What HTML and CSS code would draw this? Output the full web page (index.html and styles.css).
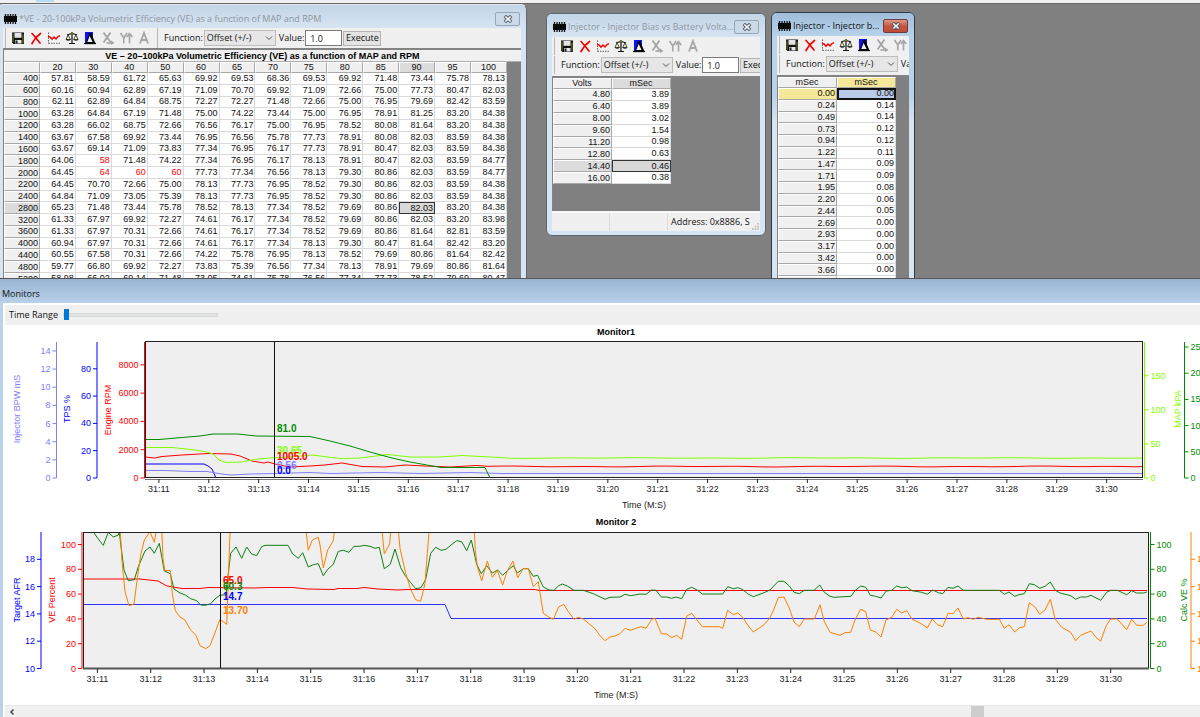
FILE: index.html
```html
<!DOCTYPE html>
<html lang="en">
<head>
<meta charset="utf-8">
<title>VE Table Editor and Monitors</title>
<link rel="stylesheet" href="styles.css">
</head>
<body>
<svg class="symbols" aria-hidden="true">
  <symbol id="i-chip" viewBox="0 0 13 10">
    <rect x="0" y="2" width="13" height="6" fill="#000"/>
    <path d="M1.5 0v10M4 0v10M6.500 0v10M9 0v10M11.500 0v10" stroke="#111" stroke-width="1.300"/>
  </symbol>
  <symbol id="i-save" viewBox="0 0 14 14">
    <path d="M1 1.500h12v11.500H2.500L1 11.500z" fill="#111"/>
    <rect x="3.500" y="2" width="7" height="4.800" fill="#e4e4e4"/>
    <rect x="4" y="9" width="6.500" height="3.500" fill="#e8e8e8"/>
    <rect x="4.500" y="9.500" width="2" height="3" fill="#222"/>
    <path d="M2 2.500v9" stroke="#8c8c30" stroke-width=".9"/>
    <path d="M12 3.500v9" stroke="#8c8c30" stroke-width=".9"/>
  </symbol>
  <symbol id="i-del" viewBox="0 0 14 14">
    <path d="M3 2.500C5.500 5 8 8.500 11 12M11.500 2.500C8 5 5 8.500 3 12.500" stroke="#f00000" stroke-width="1.700" fill="none" stroke-linecap="round"/>
  </symbol>
  <symbol id="i-wave" viewBox="0 0 14 14">
    <path d="M1.500 1.500v11M1.500 12.300h12" stroke="#666" stroke-width="1" stroke-dasharray="1.500 1" fill="none"/>
    <path d="M1 5.500l2 .5 2 2.300 2-2.300 2 2 2-2.500 2-.8" stroke="#f00" stroke-width="1.400" fill="none"/>
  </symbol>
  <symbol id="i-scale" viewBox="0 0 14 14">
    <path d="M7 1v11M4 12.500h6M2 4l3.500-1.200h3L12 4" stroke="#111" stroke-width="1.200" fill="none"/>
    <path d="M3 3.800L1 8.500h4.500zM11 3.800L8.700 8.500H13z" fill="#f3f3c0" stroke="#222" stroke-width=".8"/>
    <path d="M.5 8.500h5.500q-2.700 2.500-5.500 0zM8.200 8.500h5.500q-2.700 2.500-5.500 0z" fill="#222"/>
    <circle cx="7" cy="2.500" r="1.300" fill="#777718"/>
  </symbol>
  <symbol id="i-tri" viewBox="0 0 14 14">
    <rect x="2" y="1" width="8" height="11" fill="#1010ff"/>
    <path d="M6.500 3.500L10.500 11.500H3.500z" fill="#f0f0f0" stroke="#000" stroke-width="1.100"/>
    <path d="M7.300 2.500l4.200 9.500" stroke="#000" stroke-width="1.600"/>
    <path d="M5.500 2.500h3.500" stroke="#000" stroke-width="1.200"/>
    <path d="M1 12.500h12" stroke="#000" stroke-width="1.300"/>
  </symbol>
  <symbol id="i-xarr" viewBox="0 0 14 14">
    <path d="M2.500 1.500l7 9.500M9.500 1.500l-7 10" stroke="#a2a2a2" stroke-width="1.700" fill="none"/>
    <path d="M5.500 12h6" stroke="#a2a2a2" stroke-width="1.600"/><path d="M10 9.500l3.500 2.500-3.500 2z" fill="#a2a2a2"/>
  </symbol>
  <symbol id="i-yarr" viewBox="0 0 14 14">
    <path d="M1.500 2l3.300 5L8 2M4.800 7v5.500M10.500 3v9.500M7.800 6l2.700-3.500L13.300 6" stroke="#a6a6a6" stroke-width="1.600" fill="none"/>
  </symbol>
  <symbol id="i-a" viewBox="0 0 14 14">
    <path d="M3 12.500L7 2l4 10.500M4.500 9h5" stroke="#a6a6a6" stroke-width="1.800" fill="none"/>
  </symbol>
  <symbol id="i-close" viewBox="0 0 10 8">
    <path d="M1.800 1l6.400 6M8.200 1l-6.400 6" stroke="#4a5564" stroke-width="3.400" fill="none"/>
    <path d="M2.300 1.500l5.400 5M7.700 1.500l-5.400 5" stroke="#fff" stroke-width="1.700" fill="none"/>
  </symbol>
  <symbol id="i-chev" viewBox="0 0 8 6"><path d="M1 1.500l3 3 3-3" stroke="#555" fill="none"/></symbol>
</svg>

<div class="app">
  <div class="strip"><span class="strip-tab"></span></div>

  <main class="desktop">
    <section class="win win-ve" aria-label="VE table">
      <header class="titlebar">
        <svg class="chip"><use href="#i-chip"/></svg>
        <h2>*VE - 20-100kPa Volumetric Efficiency (VE) as a function of MAP and RPM</h2>
        <button class="close" aria-label="Close"><svg><use href="#i-close"/></svg></button>
      </header>
      <div class="client">
        <div class="bars single">
          <div class="bar icons"></div>
          <div class="bar fields">
            <label for="fn1">Function:</label>
            <span class="pick"><select id="fn1"><option>Offset (+/-)</option></select><svg><use href="#i-chev"/></svg></span>
            <label for="val1">Value:</label><input id="val1" type="text" value="1.0">
            <button class="exec">Execute</button>
          </div>
        </div>
        <div class="grid-area">
          <h3 class="caption">VE – 20–100kPa Volumetric Efficiency (VE) as a function of MAP and RPM</h3>
          <table class="sheet sheet-ve" id="ve"></table>
        </div>
      </div>
    </section>

    <section class="win win-bias" aria-label="Injector bias">
      <header class="titlebar">
        <svg class="chip"><use href="#i-chip"/></svg>
        <h2>Injector - Injector Bias vs Battery Volta...</h2>
        <button class="close" aria-label="Close"><svg><use href="#i-close"/></svg></button>
      </header>
      <div class="client">
        <div class="bars">
          <div class="bar icons"></div>
          <div class="bar fields">
            <label for="fn2">Function:</label>
            <span class="pick"><select id="fn2"><option>Offset (+/-)</option></select><svg><use href="#i-chev"/></svg></span>
            <label for="val2">Value:</label><input id="val2" type="text" value="1.0">
            <button class="exec">Execute</button>
          </div>
        </div>
        <div class="grid-area"><table class="sheet sheet-inj" id="bias"></table></div>
        <footer class="status"><span></span><span></span><span>Address: 0x8886, S</span>
          <svg class="grip" viewBox="0 0 8 8"><path d="M6 0h2v2H6zM3 3h2v2H3zM6 3h2v2H6zM0 6h2v2H0zM3 6h2v2H3zM6 6h2v2H6z" fill="#bdbdbd"/></svg>
        </footer>
      </div>
    </section>

    <section class="win win-adder active" aria-label="Injector adder">
      <header class="titlebar">
        <svg class="chip"><use href="#i-chip"/></svg>
        <h2>Injector - Injector b...</h2>
        <button class="close" aria-label="Close"><svg><use href="#i-close"/></svg></button>
      </header>
      <div class="client">
        <div class="bars">
          <div class="bar icons"></div>
          <div class="bar fields">
            <label for="fn3">Function:</label>
            <span class="pick"><select id="fn3"><option>Offset (+/-)</option></select><svg><use href="#i-chev"/></svg></span>
            <label for="val3">Value:</label><input id="val3" type="text" value="1.0">
          </div>
        </div>
        <div class="grid-area"><table class="sheet sheet-inj" id="adder"></table></div>
      </div>
    </section>
  </main>

  <section class="monitors" aria-label="Monitors">
    <h2 class="mon-title">Monitors</h2>
    <div class="mon-body">
      <div class="range-bar"><label for="range">Time Range</label><input id="range" type="range" min="0" max="100" value="0"></div>
      <svg class="chart" id="chart1" viewBox="3 325 1197 190"></svg>
      <svg class="chart" id="chart2" viewBox="3 515 1197 190"></svg>
      <div class="scroll">
        <button aria-label="Scroll left"><svg viewBox="0 0 6 8"><path d="M4.500 1.500L2 4l2.500 2.500" stroke="#444" stroke-width="1.500" fill="none"/></svg></button>
        <span class="lane"></span><span class="thumb"></span><span class="lane-after"></span>
      </div>
    </div>
  </section>
</div>
<script src="script.js"></script>
</body>
</html>
```

FILE: styles.css
```css
* { box-sizing: border-box; }
body { margin: 0; overflow: hidden; font: 9px/12px "Open Sans", "Noto Sans", sans-serif; color: #111; background: #808080; }
h2, h3 { margin: 0; font-weight: 400; }
button, input, select { font: inherit; color: inherit; }
.symbols { position: absolute; width: 0; height: 0; }

.app { display: grid; grid-template-rows: 4px 274px minmax(0, 1fr); height: 100vh; }
.strip { background: #f0f0f0; border-bottom: 1px solid #686868; padding-left: 36px; }
.strip-tab { display: block; width: 18px; height: 2px; background: #b5dcf7; }
.desktop { position: relative; overflow: hidden; background: #808080; }

/* windows placed on the desktop */
.win { position: absolute; display: flex; flex-direction: column; border: 1px solid #5e6770; border-radius: 6px 6px 0 0; background: #d7e4f2; padding: 0 5px 4px; }
.win-ve { left: -3px; top: 0; width: 530px; height: 300px; border-top-color: #dfe8f0; }
.win-bias { left: 546px; top: 9px; width: 220px; height: 223px; border-radius: 6px; }
.win-adder { left: 771px; top: 8px; width: 144px; height: 300px; }
.titlebar { flex: none; display: flex; align-items: center; gap: 2px; height: 23px; margin: 0 -5px; padding: 3px 6px 0; border-radius: 5px 5px 0 0; background: linear-gradient(#c3d5e6, #d7e4f2); color: #8e969e; }
.win-ve .titlebar { padding-top: 4px; }
.titlebar h2 { flex: 1; min-width: 0; font-size: 9px; line-height: 14px; white-space: nowrap; }
.active { background: linear-gradient(#b7d2ea 80px, #d7e4f2 110px); border-color: #303a44; }
.active .titlebar { background: linear-gradient(#9fbedb, #b7d2ea); color: #111; }
.chip { flex: none; width: 13px; height: 10px; }
.close { flex: none; display: grid; place-items: center; width: 25px; height: 14px; padding: 0; border: 1px solid #94a5b8; border-radius: 2px; background: #cadae9; }
.close svg { width: 10px; height: 8px; }
.active .close { background: linear-gradient(#dd9a8c, #c5553f 50%, #c04a36); border-color: #6b3a3a; }

.client { flex: 1; min-height: 0; display: flex; flex-direction: column; background: #f0f0f0; overflow: hidden; }
.bars { flex: none; display: flex; flex-direction: column; gap: 1px; padding-bottom: 2px; }
.bars.single { flex-direction: row; padding-bottom: 0; }
.bar { display: flex; align-items: center; height: 18px; margin-left: 2px; border-left: 1px solid #b8b8b8; white-space: nowrap; }
.icons { gap: 4px; padding-left: 5px; }
.tool { flex: none; padding: 0; border: 0; background: none; width: 14px; height: 14px; }
.tool svg { display: block; width: 14px; height: 14px; }
.fields { gap: 1px; padding-left: 6px; overflow: hidden; }
.pick { position: relative; flex: none; margin-right: 2px; }
.pick select { appearance: none; display: block; width: 72px; height: 16px; padding: 0 2px; border: 1px solid #bcbcbc; border-radius: 0; background: #e6e6e6; line-height: 12px; }
.pick svg { position: absolute; right: 3px; top: 5px; width: 8px; height: 6px; pointer-events: none; }
.fields input { flex: none; width: 37px; height: 16px; padding: 0 4px; border: 1px solid #7a7a7a; background: #fff; }
.exec { flex: none; width: 38px; height: 15px; padding: 0; border: 1px solid #b4b4b4; background: #e3e3e3; }
.single .bar { height: 20px; }
.single .icons { padding-right: 3px; }

.grid-area { flex: 1; min-height: 0; overflow: hidden; background: #808080; border-top: 2px solid #838383; border-left: 1px solid #838383; }
.caption { height: 12px; border-bottom: 1px solid #b0b0b0; background: #f0f0f0; font: bold 9px/12px "Liberation Sans", Arial, sans-serif; text-align: center; color: #000; overflow: hidden; }

.sheet { table-layout: fixed; border-collapse: separate; border-spacing: 0; font: 9px/9px "Liberation Sans", Arial, sans-serif; }
.sheet th, .sheet td { height: 11px; padding: 0 1px 0 0; text-align: right; overflow: hidden; }
.sheet td { background: #fff; border-right: 1px solid #dadada; border-bottom: 1px solid #dadada; }
.sheet th { font-weight: 400; background: #f0f0f0; border: 1px solid #a8a8a8; border-top-color: #fff; border-left-color: #fff; }
.sheet thead th { text-align: center; }
.sheet .picked { background: #dcdcdc; }
.sheet td.picked { border: 1px solid #333; background: #d8d8d8; }
.sheet .edited { color: #f00; }
.sheet-ve { width: 503px; height: 223px; }
.sheet-inj { width: 118px; }
#bias { height: 106px; }
#adder { height: 211px; }
.active .sheet .picked { background: #f5e999; }
.active .sheet td.picked { border: 2px solid #111; background: #b9cbe8; line-height: 7px; padding: 0; }

.status { flex: none; position: relative; display: flex; height: 20px; border-top: 2px solid #f8f8f8; line-height: 17px; }
.status span { width: 58px; border-right: 1px solid #dcdcdc; }
.status span:nth-child(3) { flex: 1; border: 0; padding-left: 3px; white-space: nowrap; }
.grip { position: absolute; right: 1px; bottom: 1px; width: 7px; height: 7px; }

/* monitors */
.monitors { display: flex; flex-direction: column; min-height: 0; border-top: 1px solid #555; background: #b9d1ea; }
.mon-title { flex: none; height: 24px; padding: 4px 2px 0; line-height: 22px; font-size: 9px; background: linear-gradient(#98b4d2, #b9d1ea); }
.mon-body { flex: 1; min-height: 0; margin-left: 3px; display: flex; flex-direction: column; background: #fff; padding-top: 2px; }
.range-bar { flex: none; display: flex; align-items: center; gap: 5px; height: 20px; margin-left: 2px; padding-left: 4px; background: #f0f0f0; }
#range { appearance: none; width: 155px; height: 12px; margin: 0; background: transparent; }
#range::-webkit-slider-runnable-track { height: 4px; background: #e2e4e4; border: 1px solid #d8dada; }
#range::-webkit-slider-thumb { appearance: none; width: 5px; height: 11px; margin-top: -5px; background: #0078d7; }
.chart { display: block; flex: none; width: 100%; font-family: "Liberation Sans", Arial, sans-serif; font-size: 9px; }
.chart .bold { font-weight: 700; }
.chart .read { font-weight: 700; font-size: 10px; }
.chart .mid { text-anchor: middle; }
.chart .end { text-anchor: end; }
.scroll { flex: 1; display: flex; align-items: center; min-height: 0; margin-left: 2px; border-top: 1px solid #e6e6e6; background: #f0f0f0; }
.scroll button { display: grid; place-items: center; width: 14px; height: 12px; padding: 0; border: 0; background: none; }
.scroll button svg { width: 6px; height: 8px; }
.lane { flex: 163; }
.lane-after { flex: 37; }
.thumb { width: 13px; height: 11px; background: #cdcdcd; }
```

FILE: script.js
```js
// toolbars
const tools = [['save', 'Save'], ['del', 'Delete'], ['wave', 'Graph'], ['scale', 'Compare'], ['tri', 'Delta'], ['xarr', 'X axis'], ['yarr', 'Y axis'], ['a', 'Text']];
document.querySelectorAll('.icons').forEach(bar => {
  bar.innerHTML = tools.map(([id, name]) => `<button class="tool" aria-label="${name}"><svg><use href="#i-${id}"/></svg></button>`).join('');
});

// tables
const veCols = [20, 30, 40, 50, 60, 65, 70, 75, 80, 85, 90, 95, 100];
const veRows = `400 57.81 58.59 61.72 65.63 69.92 69.53 68.36 69.53 69.92 71.48 73.44 75.78 78.13
600 60.16 60.94 62.89 67.19 71.09 70.70 69.92 71.09 72.66 75.00 77.73 80.47 82.03
800 62.11 62.89 64.84 68.75 72.27 72.27 71.48 72.66 75.00 76.95 79.69 82.42 83.59
1000 63.28 64.84 67.19 71.48 75.00 74.22 73.44 75.00 76.95 78.91 81.25 83.20 84.38
1200 63.28 66.02 68.75 72.66 76.56 76.17 75.00 76.95 78.52 80.08 81.64 83.20 84.38
1400 63.67 67.58 69.92 73.44 76.95 76.56 75.78 77.73 78.91 80.08 82.03 83.59 84.38
1600 63.67 69.14 71.09 73.83 77.34 76.95 76.17 77.73 78.91 80.47 82.03 83.59 84.38
1800 64.06 58 71.48 74.22 77.34 76.95 76.17 78.13 78.91 80.47 82.03 83.59 84.77
2000 64.45 64 60 60 77.73 77.34 76.56 78.13 79.30 80.86 82.03 83.59 84.77
2200 64.45 70.70 72.66 75.00 78.13 77.73 76.95 78.52 79.30 80.86 82.03 83.59 84.38
2400 64.84 71.09 73.05 75.39 78.13 77.73 76.95 78.52 79.30 80.86 82.03 83.59 84.38
2800 65.23 71.48 73.44 75.78 78.52 78.13 77.34 78.52 79.69 80.86 82.03 83.20 84.38
3200 61.33 67.97 69.92 72.27 74.61 76.17 77.34 78.52 79.69 80.86 82.03 83.20 83.98
3600 61.33 67.97 70.31 72.66 74.61 76.17 77.34 78.52 79.69 80.86 81.64 82.81 83.59
4000 60.94 67.97 70.31 72.66 74.61 76.17 77.34 78.13 79.30 80.47 81.64 82.42 83.20
4400 60.55 67.58 70.31 72.66 74.22 75.78 76.95 78.13 78.52 79.69 80.86 81.64 82.42
4800 59.77 66.80 69.92 72.27 73.83 75.39 76.56 77.34 78.13 78.91 79.69 80.86 81.64
5200 58.98 66.02 69.14 71.48 73.05 74.61 75.78 76.56 77.34 77.73 78.52 79.69 80.47`.split('\n').map(r => r.split(' '));
const biasRows = [['4.80', '3.89'], ['6.40', '3.89'], ['8.00', '3.02'], ['9.60', '1.54'], ['11.20', '0.98'], ['12.80', '0.63'], ['14.40', '0.46'], ['16.00', '0.38']];
const adderRows = [['0.00', '0.00'], ['0.24', '0.14'], ['0.49', '0.14'], ['0.73', '0.12'], ['0.94', '0.12'], ['1.22', '0.11'], ['1.47', '0.09'], ['1.71', '0.09'], ['1.95', '0.08'], ['2.20', '0.06'], ['2.44', '0.05'], ['2.69', '0.00'], ['2.93', '0.00'], ['3.17', '0.00'], ['3.42', '0.00'], ['3.66', '0.00'], ['3.91', '0.00']];

function fill(id, heads, rows, pickRow, pickCol) {
  const cls = on => on ? ' class="picked"' : '';
  document.getElementById(id).innerHTML =
    '<thead><tr>' + heads.map((h, i) => `<th scope="col"${cls(i === pickCol)}>${h}</th>`).join('') + '</tr></thead><tbody>' +
    rows.map((r, y) => '<tr>' + r.map((v, x) => x === 0
      ? `<th scope="row"${cls(y === pickRow)}>${v}</th>`
      : `<td${y === pickRow && x === pickCol ? cls(true) : v.includes('.') ? '' : ' class="edited"'}>${v}</td>`).join('') + '</tr>').join('') + '</tbody>';
}
fill('ve', ['', ...veCols], veRows, 11, 11);
fill('bias', ['Volts', 'mSec'], biasRows, 6, 1);
fill('adder', ['mSec', 'mSec'], adderRows, 0, 1);

// charts
const text = (x, y, s, color, cls = '') => `<text x="${x}" y="${y}" fill="${color}" class="${cls}">${s}</text>`;
const line = (x1, y1, x2, y2, color, w = 1) => `<path d="M${x1} ${y1}L${x2} ${y2}" stroke="${color}" stroke-width="${w}"/>`;
const vlabel = (x, y, s, color) => `<text transform="translate(${x} ${y}) rotate(-90)" fill="${color}" class="mid">${s}</text>`;

// axis with labels; side -1 puts them left of the line, 1 right of it
function axis(x, top, base, step, values, color, side, w = 1) {
  return line(x, top, x, base, color, w) + values.map((v, i) => {
    const y = base - i * step;
    return line(x, y, x + side * 4, y, color) + text(x + side * 6, y + 3, v, color, side < 0 ? 'end' : '');
  }).join('');
}
function timeAxis(x, y, step) {
  let out = '';
  for (let i = 0; i < 20; i++) out += line(x + i * step, y, x + i * step, y + 4, '#222') + text(x + i * step, y + 13, '31:' + (11 + i), '#222', 'mid');
  return out;
}
const curve = (pts, color, clip) => `<polyline points="${pts}" fill="none" stroke="${color}" stroke-width="1" clip-path="url(#${clip})"/>`;
// samples are stored in thirds of a unit, in blocks that each have their own origin
const blocks = list => list.map(([x0, y0, pts]) => pts.split(' ').map(p => {
  const [x, y] = p.split(',').map(Number);
  return (x0 + x / 3).toFixed(1) + ',' + (y0 + y / 3).toFixed(1);
}).join(' ')).join(' ');

function ripple(from, to, y, amp, phase) {
  let out = '';
  for (let x = from; x <= to; x += 12) out += ` ${x},${(y + amp * Math.sin(x / 17 + phase) * Math.cos(x / 41)).toFixed(1)}`;
  return out + ` ${to},${y}`;
}

const C = { bpw: '#8080ff', tps: '#0000ff', rpm: '#ff0000', map: '#80ff00', green: '#008c00', orange: '#ff8000' };
document.getElementById('chart1').innerHTML =
  '<clipPath id="p1"><rect x="146" y="342" width="996" height="136"/></clipPath>' +
  '<rect x="145.500" y="341.500" width="997" height="136" fill="#efefef" stroke="#222"/>' +
  line(145, 479.5, 1143, 479.5, '#777') +
  text(616, 335, 'Monitor1', '#000', 'mid bold') + text(644, 508, 'Time (M:S)', '#222', 'mid') +
  timeAxis(158.9, 479, 49.88) +
  axis(56.5, 342, 478, 18.15, [0, 2, 4, 6, 8, 10, 12, 14], C.bpw, -1) +
  axis(97, 342, 478, 27.3, [0, 20, 40, 60, 80], C.tps, -1) +
  axis(144.5, 342, 478, 28.3, [0, 2000, 4000, 6000, 8000], C.rpm, -1) +
  axis(1144.5, 342, 478, 34.1, [0, 50, 100, 150], C.map, 1) +
  axis(1184.5, 342, 478, 26.2, [0, 50, 100, 150, 200, 250], C.green, 1) +
  vlabel(20, 409, 'Injector BPW mS', C.bpw) + vlabel(70, 409, 'TPS %', C.tps) + vlabel(111, 410, 'Engine RPM', C.rpm) + vlabel(1181, 409, 'MAP kPA', C.map) +
  curve('145,464 204,464 208,466 212,469 216,478', C.tps, 'p1') +
  curve('145,470.500 165,470.500 190,471.500 207,471.500 222,474 231,475 250,474 275,473.500 310,472.500 330,473.500 380,472.500 420,473.500 470,472.500 500,473.500 1142,473.500', C.bpw, 'p1') +
  curve('145,457 155,458 162,456.500 182,455 208,453.500 231,454 240,456 252,461 258,462 264,463 268,462 275,464 290,467 310,466 325,465 342,463 362,466.500 385,467 405,465 425,466 450,467 476,465.500' + ripple(488, 1142, 466.5, .5, 0), C.rpm, 'p1') +
  curve('145,447.500 172,447.500 195,450 207,452 213,454 219,460 226,462.500 241,462 258,459 270,458 290,457 312,455 340,458.500 360,458 388,454.500 410,457 440,457 462,455.500 500,457.500' + ripple(512, 1142, 458, .4, 2), C.map, 'p1') +
  curve('145,439.500 159,439.500 182,437.500 200,436 213,434 238,434 256,436 310,436.500 330,441 350,446 370,452 392,458 410,462 427,465 441,467.500 485,467.500 490,478', C.green, 'p1') +
  line(274.5, 342, 274.5, 478, '#111') +
  text(277, 432, '81.0', C.green, 'read') + text(277, 454, '30.65', C.map, 'read') + text(277, 460, '1005.0', C.rpm, 'read') +
  text(277, 469, '0.56', C.bpw, 'read') + text(277, 474, '0.0', C.tps, 'read');

const green2 = blocks([
  [0, 515, '250,55 255,50 280,50 293,70 310,91 325,52 340,66 355,60 358,52 372,165 385,197 403,194 415,155 435,108 450,96 463,115 478,85 493,168 511,176 522,222 540,234 556,240 572,251 590,257 602,270 616,271 632,266 645,252 660,240 678,240 682,200 692,115 708,96 725,130 740,96 755,117 770,122 785,95 795,91 864,91 878,117 895,130 908,113 925,156 940,149 955,146'],
  [320, 520, '10,167 23,148 40,133 55,94 70,91 87,97 102,79 120,79 132,76 150,79 165,85 178,82 193,146 211,133 225,87 242,143 255,166 272,188 287,206 303,203 317,178 332,100 347,82 363,91 378,88 393,75 410,62 425,65 440,92 454,60 470,133 484,161 500,137 517,159 533,150 548,166 563,151 580,137 592,159 610,146 625,146 640,169 653,166 670,201 687,210 702,211 716,197 727,192 742,198 762,211 790,211 820,221 855,238 870,232 900,231 915,223 932,227 960,222 978,223 995,210 1008,211 1024,231 1040,231 1055,235 1068,231 1085,236 1100,208 1115,202 1130,209 1147,222'],
  [710, 520, '0,222 38,222 53,200 70,206 83,203 97,208 113,221 130,230 162,218 180,210 205,184 222,184 238,198 252,217 268,221 283,211 312,211 329,195 343,217 360,229 372,232 423,229 435,212 452,198 467,202 481,226 497,229 513,234 529,213 545,211 560,198 575,203 590,201 606,212 635,217 652,223 668,210 685,218 698,221 714,202 729,205 744,198 760,211 868,211 883,223 897,216 914,229 927,224 943,221 958,191 973,194 989,205 1005,199 1021,186 1036,211 1050,219 1082,227 1097,238 1112,231 1130,231 1143,226 1172,241 1190,217 1202,211 1222,211 1250,224 1265,212 1280,219 1300,219 1310,216']]);
const orange2 = blocks([
  [0, 515, '361,50 366,140 375,230 387,272 402,267 412,190 422,120 433,75 450,50 463,82 470,40 485,40 489,130 494,166 511,167 517,235 526,287 540,306 554,314 572,345 588,361 600,392 617,401 630,392 660,313 680,328 685,200 690,50 691,20 915,20 925,106 937,75 955,67'],
  [320, 520, '0,75 10,144 23,90 40,62 44,20 185,20 193,102 209,71 213,20 234,20 240,85 257,160 272,208 287,239 302,244 315,190 322,100 329,10 462,10 466,90 472,140 485,182 502,123 517,172 532,152 548,195 562,152 579,123 593,173 610,146 625,146 640,200 655,185 670,280 685,290 700,298 716,261 731,253 745,275 762,298 775,292 790,297 825,326 840,347 855,362 870,351 885,348 900,341 915,325 932,331 948,325 963,320 978,325 995,298 1005,295 1024,341 1040,342 1055,353 1070,346 1085,358 1100,288 1115,280 1147,320'],
  [710, 520, '0,320 28,320 38,325 53,271 70,284 83,279 98,292 113,315 130,336 162,314 178,296 190,272 205,233 222,231 238,264 252,306 268,320 283,297 313,297 330,254 343,305 360,337 390,346 405,338 422,337 435,300 452,268 467,275 481,330 497,336 513,351 528,300 545,292 560,268 575,279 590,272 606,297 635,312 652,324 667,297 682,314 698,320 714,280 729,281 744,264 760,297 775,293 790,298 805,292 830,298 868,298 883,325 897,314 914,336 927,324 943,320 958,248 975,261 989,283 1005,270 1021,238 1036,298 1055,322 1082,337 1097,362 1112,346 1143,333 1158,352 1172,364 1188,318 1202,297 1222,297 1250,329 1265,298 1280,316 1300,316 1310,307']]);
document.getElementById('chart2').innerHTML =
  '<clipPath id="p2"><rect x="84" y="533" width="1065" height="135"/></clipPath>' +
  '<rect x="83.500" y="532.500" width="1065" height="136" fill="#efefef" stroke="#222"/>' +
  line(83, 668.5, 1149, 668.5, '#555', 2) +
  text(616, 525, 'Monitor 2', '#000', 'mid bold') + text(616, 698, 'Time (M:S)', '#222', 'mid') +
  timeAxis(97.4, 669, 53.33) +
  axis(41, 532, 668.5, 27.3, [10, 12, 14, 16, 18], C.tps, -1) +
  axis(82, 532, 668.5, 24.8, [0, 20, 40, 60, 80, 100], C.rpm, -1) +
  axis(1150.5, 532, 668.5, 24.8, [0, 20, 40, 60, 80, 100], C.green, 1) +
  axis(1191, 532, 668.5, 27.3, [10, 12, 14, 16, 18], C.orange, 1) +
  vlabel(20, 600, 'Target AFR', C.tps) + vlabel(55, 600, 'VE Percent', C.rpm) + vlabel(1187, 600, 'Calc VE %', C.green) +
  curve('83,579 140,579 158,581 167,586 182,588.500 200,588.500 208,587.500 255,588 267,587.500 293,587.500 307,589 334,589.500 338,588.500 357,588.500 364,587.500 378,589 398,590 407,589.500 535,589.500 539,590.500 1147,590.500', C.rpm, 'p2') +
  curve('83,604.500 445,604.500 451,618.500 1147,618.500', '#3030ff', 'p2') +
  curve(green2, '#108010', 'p2') + curve(orange2, C.orange, 'p2') +
  line(220.5, 533, 220.5, 668, '#111') +
  text(223, 584, '65.0', C.rpm, 'read') + text(223, 590, '60.3', C.green, 'read') + text(223, 600, '14.7', C.tps, 'read') + text(223, 614, '13.70', C.orange, 'read');
```
